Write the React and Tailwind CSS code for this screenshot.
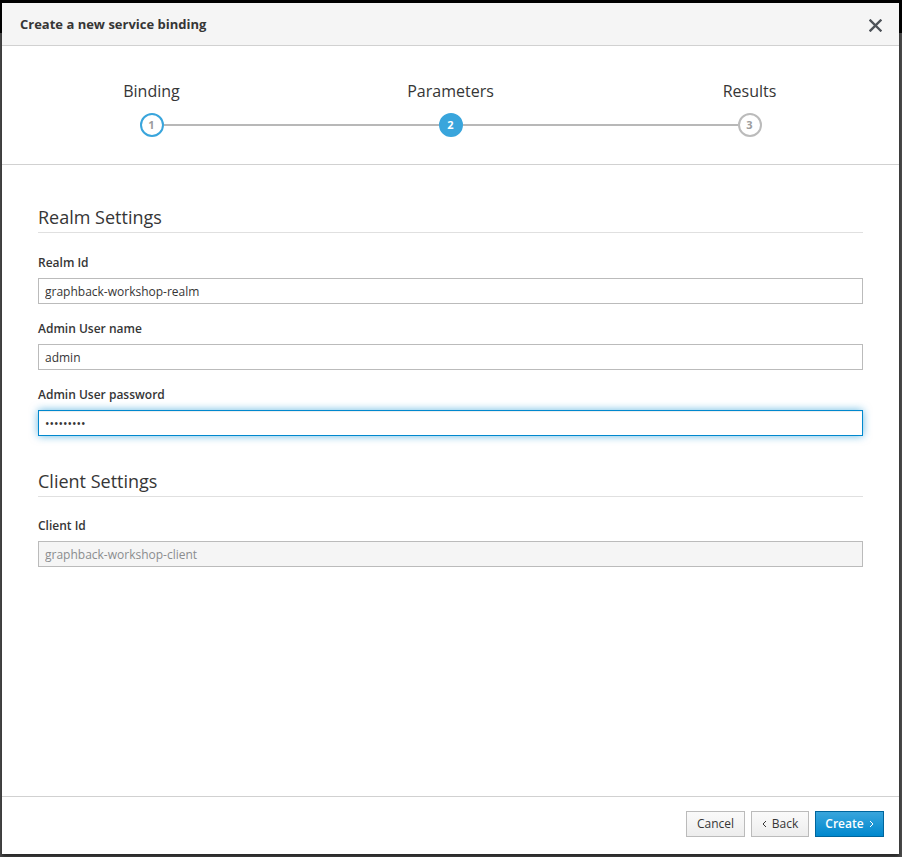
import React from 'react';

const font = { fontFamily: '"Open Sans", "Liberation Sans", sans-serif' };

function Step({ num, label, state, first, last }) {
  const circle =
    state === 'active'
      ? 'bg-[#39a5dc] border-[#39a5dc] text-white'
      : state === 'done'
      ? 'bg-white border-[#39a5dc] text-[#9c9c9c]'
      : 'bg-white border-[#bbbbbb] text-[#9c9c9c]';
  return (
    <div className="flex flex-col items-center">
      <div className="text-[16px] leading-[22px] text-[#363636]">{label}</div>
      <div className="mt-[11px] flex w-full items-center">
        <div className={`h-[2px] flex-1 ${first ? '' : 'bg-[#b8b8b8]'}`} />
        <div
          className={`flex h-[24px] w-[24px] items-center justify-center rounded-full border-2 text-[11px] font-bold ${circle}`}
        >
          {num}
        </div>
        <div className={`h-[2px] flex-1 ${last ? '' : 'bg-[#b8b8b8]'}`} />
      </div>
    </div>
  );
}

function Field({ label, children, className = '' }) {
  return (
    <div className={className}>
      <div className="text-[12px] font-semibold leading-[16px] text-[#363636]">{label}</div>
      <div className="mt-[7px]">{children}</div>
    </div>
  );
}

const inputCls =
  'block h-[26px] w-full border border-[#bbbbbb] bg-white px-[6px] text-[12px] text-[#363636] outline-none';

export default function App() {
  return (
    <div
      className="h-[857px] w-[902px] overflow-hidden bg-[linear-gradient(to_bottom,#000_33px,#4d4d4d_33px)] pl-[2px] pt-[3px]"
      style={font}
    >
      <div className="flex h-[851px] w-[897px] flex-col bg-white shadow-[0_3px_4px_rgba(0,0,0,0.5)]">
        {/* header */}
        <div className="flex h-[43px] shrink-0 items-center justify-between border-b border-[#d1d1d1] bg-[#f5f5f5] pl-[18px] pr-[17px] pt-[2px]">
          <div className="text-[13px] font-bold text-[#363636]">Create a new service binding</div>
          <svg width="13" height="13" viewBox="0 0 13 13" className="text-[#4d5258]">
            <path d="M1.5 1.5 L11.5 11.5 M11.5 1.5 L1.5 11.5" stroke="currentColor" strokeWidth="2.4" strokeLinecap="square" />
          </svg>
        </div>

        {/* steps */}
        <div className="grid h-[119px] shrink-0 grid-cols-3 border-b border-[#d1d1d1] pt-[34px]">
          <Step num="1" label="Binding" state="done" first />
          <Step num="2" label="Parameters" state="active" />
          <Step num="3" label="Results" state="todo" last />
        </div>

        {/* body */}
        <div className="flex-1 px-[36px] pt-[40px]">
          <div className="border-b border-[#e0e0e0] pb-[3px] text-[18px] leading-[24px] text-[#363636]">
            Realm Settings
          </div>
          <Field label="Realm Id" className="mt-[22px]">
            <input className={inputCls} defaultValue="graphback-workshop-realm" readOnly style={font} />
          </Field>
          <Field label="Admin User name" className="mt-[17px]">
            <input className={inputCls} defaultValue="admin" readOnly style={font} />
          </Field>
          <Field label="Admin User password" className="mt-[17px]">
            <input
              type="password"
              className="block h-[26px] w-full border border-[#0088ce] bg-white px-[6px] text-[12px] text-[#363636] outline-none shadow-[inset_0_1px_1px_rgba(3,3,3,0.075),0_0_8px_rgba(0,136,206,0.6)]"
              defaultValue="password1"
              readOnly
              style={font}
            />
          </Field>

          <div className="mt-[33px] border-b border-[#e0e0e0] pb-[3px] text-[18px] leading-[24px] text-[#363636]">
            Client Settings
          </div>
          <Field label="Client Id" className="mt-[21px]">
            <input
              className="block h-[26px] w-full border border-[#bbbbbb] bg-[#f5f5f5] px-[6px] text-[12px] text-[#8b8d8f] outline-none"
              defaultValue="graphback-workshop-client"
              disabled
              style={font}
            />
          </Field>
        </div>

        {/* footer */}
        <div className="flex h-[58px] shrink-0 items-start justify-end gap-[6px] border-t border-[#d1d1d1] pr-[15px] pt-[14px]">
          <button className="h-[26px] w-[59px] border border-[#bbbbbb] bg-[linear-gradient(to_bottom,#fafafa,#ededed)] text-[12px] text-[#363636]">
            Cancel
          </button>
          <button className="flex h-[26px] w-[58px] items-center justify-center gap-[5px] border border-[#bbbbbb] bg-[linear-gradient(to_bottom,#fafafa,#ededed)] text-[12px] text-[#363636]">
            <svg width="5" height="8" viewBox="0 0 5 8">
              <path d="M4 1 L1 4 L4 7" fill="none" stroke="#363636" strokeWidth="1" />
            </svg>
            Back
          </button>
          <button className="flex h-[26px] w-[69px] items-center justify-center gap-[5px] border border-[#00659c] bg-[linear-gradient(to_bottom,#39a5dc,#0088ce)] text-[12px] font-semibold text-white">
            Create
            <svg width="5" height="8" viewBox="0 0 5 8">
              <path d="M1 1 L4 4 L1 7" fill="none" stroke="#fff" strokeWidth="1" />
            </svg>
          </button>
        </div>
      </div>
    </div>
  );
}
